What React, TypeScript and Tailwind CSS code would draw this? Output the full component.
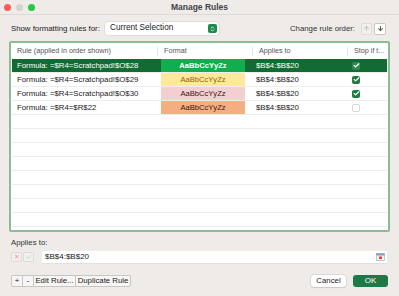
import { Check, ArrowUp, ArrowDown, ChevronUp, ChevronDown } from "lucide-react";

const rules = [
  { formula: "Formula: =$R4=Scratchpad!$O$28", cell: "bg-[#12ad4f] text-white font-bold", applies: "$B$4:$B$20", stop: true },
  { formula: "Formula: =$R4=Scratchpad!$O$29", cell: "bg-[#fde99c] text-[#9c5a00]", applies: "$B$4:$B$20", stop: true },
  { formula: "Formula: =$R4=Scratchpad!$O$30", cell: "bg-[#f3cfcf] text-[#3a1414]", applies: "$B$4:$B$20", stop: true },
  { formula: "Formula: =$R4=$R$22", cell: "bg-[#f4ae82] text-[#3a1a0a]", applies: "$B$4:$B$20", stop: false },
];

function CheckBox({ on, dark }: { on: boolean; dark?: boolean }) {
  if (!on) return <div className="h-[8px] w-[8px] rounded-[2px] border border-[#d6d6d6] bg-white" />;
  return (
    <div
      className={`flex h-[8px] w-[8px] items-center justify-center rounded-[2px] ${
        dark ? "bg-[#2f8a52]" : "bg-[#1f7a43]"
      }`}
    >
      <Check className="h-[7px] w-[7px] text-white" strokeWidth={4} />
    </div>
  );
}

export default function App() {
  return (
    <div
      className="flex h-[296px] w-[399px] flex-col overflow-hidden bg-[#eeebe9] text-[#222]"
      style={{ fontFamily: '"Liberation Sans", Arial, sans-serif' }}
    >
      {/* title bar */}
      <div className="grid h-[15px] grid-cols-[1fr_auto_1fr] items-center border-b border-[#dcd9d7] px-[4px]">
        <div className="flex items-center gap-[4px]">
          <span className="h-[7px] w-[7px] rounded-full bg-[#fe5f57]" />
          <span className="ml-[1px] h-[7px] w-[7px] rounded-full bg-[#d5d3d2]" />
          <span className="ml-[1px] h-[7px] w-[7px] rounded-full bg-[#28c840]" />
        </div>
        <div className="text-[8.5px] font-bold text-[#444]">Manage Rules</div>
        <div />
      </div>

      {/* top row */}
      <div className="mt-[7px] flex h-[13px] items-center pl-[11px] pr-[13px] text-[7.8px]">
        <span className="w-[94px] shrink-0 whitespace-nowrap">Show formatting rules for:</span>
        <div className="flex h-[13px] w-[114px] items-center justify-between rounded-[3px] bg-white pl-[5px] pr-[2px] text-[8.2px] shadow-[0_0_0_0.5px_#d0cdcb]">
          <span>Current Selection</span>
          <div className="flex h-[9px] w-[9px] flex-col items-center justify-center rounded-[2px] bg-[#1b8a4b]">
            <ChevronUp className="-mb-[2px] h-[5px] w-[5px] text-white" strokeWidth={4} />
            <ChevronDown className="h-[5px] w-[5px] text-white" strokeWidth={4} />
          </div>
        </div>
        <span className="ml-auto mr-[6px] whitespace-nowrap text-[#333]">Change rule order:</span>
        <div className="flex gap-[2px]">
          <div className="flex h-[12px] w-[11px] items-center justify-center rounded-[2px] border border-[#dedbd9] bg-[#f3f1f0]">
            <ArrowUp className="h-[7px] w-[7px] text-[#c9c6c4]" strokeWidth={3.5} />
          </div>
          <div className="flex h-[12px] w-[12px] items-center justify-center rounded-[2px] border border-[#c9c6c4] bg-white">
            <ArrowDown className="h-[7px] w-[7px] text-[#555]" strokeWidth={3.5} />
          </div>
        </div>
      </div>

      {/* table */}
      <div className="mx-[9px] mt-[6px] flex h-[191px] flex-col overflow-hidden rounded-[2px] border-2 border-[#8dbc94] bg-white px-[1px]">
        <div className="flex h-[16px] shrink-0 items-center text-[7.2px] text-[#555]">
          <div className="w-[145px] pl-[5px]">Rule (applied in order shown)</div>
          <div className="h-[9px] border-l border-[#e3e3e3]" />
          <div className="w-[94px] pl-[6px]">Format</div>
          <div className="h-[9px] border-l border-[#e3e3e3]" />
          <div className="w-[94px] pl-[6px]">Applies to</div>
          <div className="h-[9px] border-l border-[#e3e3e3]" />
          <div className="pl-[6px]">Stop if t...</div>
        </div>
        {rules.map((r, i) => {
          const sel = i === 0;
          return (
            <div
              key={i}
              className={`flex h-[14px] shrink-0 items-center border-b border-[#ededed] text-[7.8px] ${
                sel ? "text-white" : "text-[#222]"
              }`}
            >
              <div className={`flex h-full w-[149px] items-center pl-[5px] ${sel ? "bg-[#126b33]" : ""}`}>
                {r.formula}
              </div>
              <div className={`flex h-full w-[84px] items-center justify-center text-[7.6px] ${r.cell}`}>
                AaBbCcYyZz
              </div>
              <div className={`flex h-full flex-1 items-center ${sel ? "bg-[#126b33]" : ""}`}>
                <div className="w-[107px] pl-[11px]">{r.applies}</div>
                <CheckBox on={r.stop} dark={sel} />
              </div>
            </div>
          );
        })}
        {Array.from({ length: 8 }).map((_, i) => (
          <div key={i} className="h-[14px] shrink-0 border-b border-[#ededed]" />
        ))}
      </div>

      {/* applies to */}
      <div className="mt-[5px] pl-[11px] text-[7.8px] text-[#333]">Applies to:</div>
      <div className="mt-[2px] flex h-[12px] items-center pl-[11px] pr-[12px]">
        <div className="flex h-[10px] w-[11px] items-center justify-center rounded-[1px] border border-[#dedbd9] bg-[#f2f0ef] text-[7px] leading-none text-[#f0a0a0]">
          ✕
        </div>
        <div className="ml-[1px] flex h-[10px] w-[11px] items-center justify-center rounded-[1px] border border-[#dedbd9] bg-[#f2f0ef]">
          <Check className="h-[6px] w-[6px] text-[#a8d4b0]" strokeWidth={3} />
        </div>
        <div className="ml-[8px] flex h-[12px] flex-1 items-center justify-between bg-white pl-[3px] pr-[2px] text-[8px] shadow-[0_0.5px_0_#d6d3d1]">
          <span>$B$4:$B$20</span>
          <svg width="9" height="8" viewBox="0 0 9 8">
            <rect x="0.5" y="0.5" width="8" height="7" fill="#f4f4f4" stroke="#9aa3ad" strokeWidth="0.6" />
            <rect x="0.5" y="0.5" width="8" height="2" fill="#7d9bc4" />
            <rect x="3" y="3.5" width="3" height="2.5" fill="#e0404a" />
          </svg>
        </div>
      </div>

      {/* bottom buttons */}
      <div className="mt-[12px] flex h-[12px] items-center pl-[11px] pr-[11px] text-[7.8px] text-[#222]">
        <div className="flex h-[12px] items-stretch rounded-[2px] border border-[#c8c5c3] bg-[#f7f6f5]">
          <div className="flex w-[11px] items-center justify-center border-r border-[#c8c5c3]">+</div>
          <div className="flex w-[11px] items-center justify-center border-r border-[#c8c5c3]">-</div>
          <div className="flex w-[42px] items-center justify-center border-r border-[#c8c5c3]">Edit Rule...</div>
          <div className="flex w-[54px] items-center justify-center">Duplicate Rule</div>
        </div>
        <div className="ml-auto flex h-[12px] w-[35px] items-center justify-center rounded-[3px] bg-white shadow-[0_0_0_0.5px_#ccc9c7,0_0.5px_1px_rgba(0,0,0,0.15)]">
          Cancel
        </div>
        <div className="ml-[7px] flex h-[12px] w-[35px] items-center justify-center rounded-[3px] bg-[#1d7a45] text-[8px] text-white">
          OK
        </div>
      </div>
    </div>
  );
}
